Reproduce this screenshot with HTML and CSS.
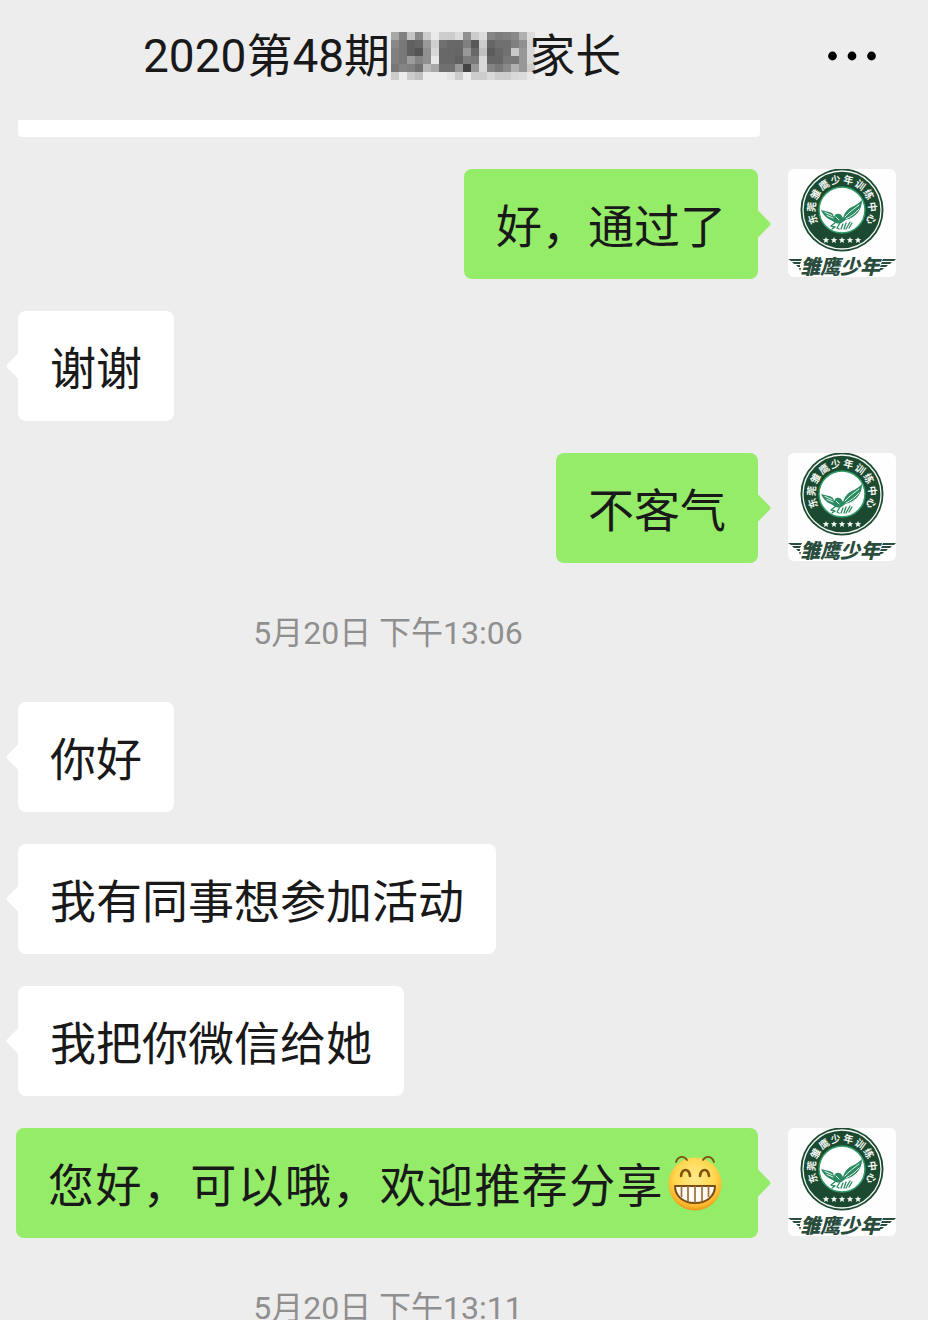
FILE: index.html
```html
<!DOCTYPE html>
<html lang="zh-CN">
<head>
    <meta charset="UTF-8">
    <meta name="viewport" content="width=device-width, initial-scale=1">
    <title>2020第48期家长</title>
    <link rel="stylesheet" href="styles.css">
</head>
<body>
    <div class="chat">
        <header class="chat-header">
            <h1 class="chat-title">2020第48期<svg class="mosaic" id="mosaic" viewBox="0 0 18 6" shape-rendering="crispEdges" aria-hidden="true"></svg>家长</h1>
            <button class="menu-btn" type="button" aria-label="更多">
                <svg viewBox="0 0 48 10" width="48" height="10">
                    <circle cx="4.500" cy="5" r="4.400"/>
                    <circle cx="24" cy="5" r="4.400"/>
                    <circle cx="43.500" cy="5" r="4.400"/>
                </svg>
            </button>
        </header>

        <main class="messages">
            <div class="bubble-end"></div>

            <div class="row me">
                <div class="bubble">好，通过了</div>
                <svg class="avatar" viewBox="0 0 108 108" role="img" aria-label="雏鹰少年">
                    <g id="logo">
                        <rect width="108" height="108" rx="6" fill="#fefefe"/>
                        <circle cx="54" cy="41" r="41.5" fill="#1c4a30"/>
                        <circle cx="54" cy="41" r="39" fill="none" stroke="#f2f7f3" stroke-width="1.3"/>
                        <circle cx="54" cy="41" r="23" fill="#fff" stroke="#2f9a68" stroke-width="1.5"/>
                        <text class="logo-ring" x="30.1 26.7 28.2 34.2 43.5 54.7 65.900 74.900 80.300 81.300" y="54.1 43.2 31.8 22.1 15.600 13.600 16.300 23.100 33.200 44.500" rotate="-108 -84 -60 -36 -12 12 36 60 84 108">东莞雏鹰少年训练中心</text>
                        <g fill="#f2f7f3">
                            <path id="star" d="M38 68l.9 2.100 2.300.1-1.800 1.500.7 2.300-2.100-1.300-2.100 1.300.7-2.300-1.800-1.500 2.300-.1z"/>
                            <use href="#star" x="8"/>
                            <use href="#star" x="16"/>
                            <use href="#star" x="24"/>
                            <use href="#star" x="32"/>
                        </g>
                        <path fill="#2b8a61" d="M33 41c5 2 9 1 12 4l1 3c1-3 3-4 5-3 2 0 3 2 4 4 2-7 6-10 11-12 3-2 5-3 8-6 0 7-3 13-8 16-3 3-7 3-10 5-3 3-6 3-8 2-6-4-11-4-15-13z"/>
                        <g fill="none" stroke="#e6f4ec" stroke-linecap="round">
                            <path stroke-width="1" d="M37 43.500l7 3M39 46.500l6 2.500M57 48c4-5 8-7 14-12M58 50c5-3 9-5 13-10M60 51c4-1 7-3 9-6M48 48l3 3"/>
                        </g>
                        <g fill="none" stroke="#2b8a61" stroke-width="1.300" stroke-linecap="round" stroke-linejoin="round">
                            <path d="M48 53l-5 4 4 1-3 2M52 54l-3 5 2 1M55 55l-2 5M58 54l-2 6M62 53l-4 7M64 54l-3 5"/>
                        </g>
                        <path fill="#294c3d" d="M0 90h14l-1 2H3zM4 93h9l-1 2H6zM8 96h4v2h-2zM11 99h2l-1 3zM108 90H95l-1 2h12zM104 93H94l-1 2h9zM100 96h-7l-1 2h6zM96 99h-4l-1 2h3z"/>
                        <text class="logo-name" x="12" y="105">雏鹰少年</text>
                    </g>
                </svg>
            </div>
            <div class="row">
                <div class="bubble">谢谢</div>
            </div>
            <div class="row me">
                <div class="bubble">不客气</div>
                <svg class="avatar" viewBox="0 0 108 108" role="img" aria-label="雏鹰少年"><use href="#logo"/></svg>
            </div>

            <time class="time">5月20日 下午13:06</time>

            <div class="row">
                <div class="bubble">你好</div>
            </div>
            <div class="row">
                <div class="bubble">我有同事想参加活动</div>
            </div>
            <div class="row">
                <div class="bubble">我把你微信给她</div>
            </div>
            <div class="row me">
                <div class="bubble full">您好，可以哦，欢迎推荐分享<svg class="emoji" viewBox="0 0 54 56" role="img" aria-label="呲牙">
                    <defs>
                        <radialGradient id="face" cx="50%" cy="38%" r="62%">
                            <stop offset="0" stop-color="#ffe98a"/>
                            <stop offset=".6" stop-color="#ffd850"/>
                            <stop offset=".88" stop-color="#fbb62c"/>
                            <stop offset="1" stop-color="#e99418"/>
                        </radialGradient>
                    </defs>
                    <circle cx="27" cy="29" r="26.500" fill="url(#face)"/>
                    <g fill="none" stroke="#80500f" stroke-linecap="round">
                        <path stroke-width="1.800" d="M8 7c2-6 8-7 11-2M35 5c3-5 9-4 11 2"/>
                        <path stroke-width="2.600" d="M13 21c1-8 8-8 9 0M32 21c1-8 8-8 9 0"/>
                    </g>
                    <path fill="#fffaf2" stroke="#7d4c12" stroke-width="2" stroke-linejoin="round" d="M7 31h40c0 10-8 17-20 17S7 41 7 31z"/>
                    <path stroke="#99703c" stroke-width="1.700" d="M13.500 31v11M20 31v15M27 31v17M34 31v15M40.500 31v11"/>
                </svg></div>
                <svg class="avatar" viewBox="0 0 108 108" role="img" aria-label="雏鹰少年"><use href="#logo"/></svg>
            </div>

            <time class="time">5月20日 下午13:11</time>
        </main>
    </div>

    <script>
        // 姓名打码，每格一个灰度值
        const rows = [
            'a8 80 c4 88 cc ea cc cc dc 90 cc dc 84 7c 80 88 b0 dc',
            '88 78 60 66 98 d0 70 68 68 80 58 cc 66 70 70 80 90 d8',
            '80 78 60 54 90 d8 68 68 66 98 68 c0 5c 68 70 c8 98 d8',
            '80 78 9c 84 90 e8 68 68 60 7c 78 d8 66 66 78 78 98 d8',
            '78 84 80 70 b8 a8 70 70 98 44 98 d8 84 78 88 b0 98 cc',
            'cc ec cc c0 ec ec ec e4 cc ec cc cc d8 cc cc d8 dc e8'
        ];
        const mosaic = document.getElementById('mosaic');
        rows.forEach((row, y) => {
            row.split(' ').forEach((c, x) => {
                const rect = document.createElementNS('http://www.w3.org/2000/svg', 'rect');
                rect.setAttribute('x', x);
                rect.setAttribute('y', y);
                rect.setAttribute('width', 1);
                rect.setAttribute('height', 1);
                rect.setAttribute('fill', '#' + c + c + c);
                mosaic.appendChild(rect);
            });
        });
    </script>
</body>
</html>
```

FILE: styles.css
```css
* {
    box-sizing: border-box;
}
body {
    margin: 0;
    background-color: #ededed;
    color: #191919;
    font-family: Roboto, 'Noto Sans CJK SC', sans-serif;
}
.chat {
    display: flex;
    flex-direction: column;
    height: 100vh;
    overflow: hidden;
}
.chat-header {
    display: flex;
    align-items: center;
    justify-content: space-between;
    flex-shrink: 0;
    height: 120px;
    padding: 0 52px 8px 143px;
}
.chat-title {
    display: flex;
    align-items: center;
    margin: 0;
    font-size: 46px;
    font-weight: 400;
    line-height: 64px;
    white-space: nowrap;
}
.mosaic {
    width: 144px;
    height: 48px;
    margin: 0 -6px 0 1px;
}
.menu-btn {
    display: flex;
    padding: 0;
    border: none;
    background: none;
    cursor: pointer;
}
.messages {
    display: flex;
    flex-direction: column;
    flex: 1;
    gap: 32px;
    min-height: 0;
    padding: 0 32px 0 16px;
}
.messages > * {
    flex-shrink: 0;
}
/* 顶部被遮住的上一条消息 */
.bubble-end {
    height: 17px;
    margin: 0 136px 0 2px;
    border-radius: 0 0 4px 4px;
    background: white;
}
.row {
    display: flex;
    padding-left: 2px;
}
.row.me {
    justify-content: flex-end;
    gap: 30px;
    padding-left: 0;
}
.bubble {
    position: relative;
    padding: 25px 32px 19px;
    border-radius: 8px;
    background-color: white;
    font-size: 46px;
    line-height: 66px;
}
.bubble::before {
    content: "";
    position: absolute;
    top: 44px;
    left: -8px;
    width: 22px;
    height: 22px;
    border-radius: 3px;
    background-color: inherit;
    transform: rotate(45deg);
}
.me .bubble {
    background-color: #95ec69;
}
.me .bubble::before {
    left: auto;
    right: -9px;
}
.bubble.full {
    flex: 1;
    text-align: justify;
    text-align-last: justify;
}
.emoji {
    width: 54px;
    height: 56px;
    margin: -10px 4px 4px;
    vertical-align: middle;
}
.avatar {
    flex-shrink: 0;
    width: 108px;
    height: 108px;
}
.logo-ring {
    font-size: 10px;
    font-weight: 700;
    fill: #f2f7f3;
}
.logo-name {
    font-size: 20px;
    font-style: italic;
    font-weight: 900;
    fill: #294c3d;
}
.time {
    height: 75px;
    padding: 2px 136px 0 0;
    color: #8f8f8f;
    font-size: 32px;
    line-height: 73px;
    text-align: center;
}
```
